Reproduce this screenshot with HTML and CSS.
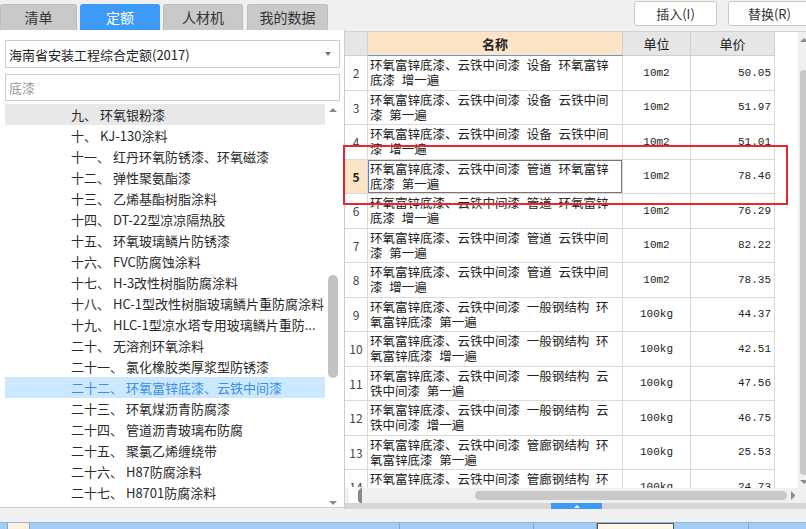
FILE: index.html
```html
<!DOCTYPE html>
<html lang="zh-CN">
<head>
<meta charset="utf-8">
<title>定额</title>
<link rel="stylesheet" href="styles.css">
</head>
<body>
<div class="top">
  <div class="tabs">
    <div class="tab first">清单</div>
    <div class="tab active">定额</div>
    <div class="tab">人材机</div>
    <div class="tab wide">我的数据</div>
  </div>
  <div class="actions">
    <div class="btn">插入(I)</div>
    <div class="btn">替换(R)</div>
  </div>
</div>

<div class="main">
  <div class="left">
    <div class="select">
      <span>海南省安装工程综合定额(2017)</span>
      <span class="caret"></span>
    </div>
    <div class="search"><span class="ph">底漆</span></div>
    <div class="tree">
      <div class="list">
        <div class="item hover">九、 环氧银粉漆</div>
        <div class="item">十、 KJ-130涂料</div>
        <div class="item">十一、 红丹环氧防锈漆、环氧磁漆</div>
        <div class="item">十二、 弹性聚氨酯漆</div>
        <div class="item">十三、 乙烯基酯树脂涂料</div>
        <div class="item">十四、 DT-22型凉凉隔热胶</div>
        <div class="item">十五、 环氧玻璃鳞片防锈漆</div>
        <div class="item">十六、 FVC防腐蚀涂料</div>
        <div class="item">十七、 H-3改性树脂防腐涂料</div>
        <div class="item">十八、 HC-1型改性树脂玻璃鳞片重防腐涂料</div>
        <div class="item">十九、 HLC-1型凉水塔专用玻璃鳞片重防...</div>
        <div class="item">二十、 无溶剂环氧涂料</div>
        <div class="item">二十一、 氯化橡胶类厚浆型防锈漆</div>
        <div class="item sel">二十二、 环氧富锌底漆、云铁中间漆</div>
        <div class="item">二十三、 环氧煤沥青防腐漆</div>
        <div class="item">二十四、 管道沥青玻璃布防腐</div>
        <div class="item">二十五、 聚氯乙烯缠绕带</div>
        <div class="item">二十六、 H87防腐涂料</div>
        <div class="item">二十七、 H8701防腐涂料</div>
        <div class="item">二十八、 耐酸碱防腐涂料</div>
      </div>
      <div class="tscroll">
        <span class="arr up"></span>
        <div class="ttrack"><div class="tthumb"></div></div>
        <span class="arr down"></span>
      </div>
    </div>
  </div>

  <div class="splitter"></div>

  <div class="right">
    <div class="grid-wrap">
      <div class="table">
        <div class="hdr">
          <div></div>
          <div class="hname">名称</div>
          <div>单位</div>
          <div>单价</div>
        </div>
        <div class="row"><div class="num">2</div><div class="name">环氧富锌底漆、云铁中间漆 设备 环氧富锌<br>底漆 增一遍</div><div class="unit">10m2</div><div class="price">50.05</div></div>
        <div class="row"><div class="num">3</div><div class="name">环氧富锌底漆、云铁中间漆 设备 云铁中间<br>漆 第一遍</div><div class="unit">10m2</div><div class="price">51.97</div></div>
        <div class="row"><div class="num">4</div><div class="name">环氧富锌底漆、云铁中间漆 设备 云铁中间<br>漆 增一遍</div><div class="unit">10m2</div><div class="price">51.01</div></div>
        <div class="row sel"><div class="num">5</div><div class="name">环氧富锌底漆、云铁中间漆 管道 环氧富锌<br>底漆 第一遍</div><div class="unit">10m2</div><div class="price">78.46</div></div>
        <div class="row"><div class="num">6</div><div class="name">环氧富锌底漆、云铁中间漆 管道 环氧富锌<br>底漆 增一遍</div><div class="unit">10m2</div><div class="price">76.29</div></div>
        <div class="row"><div class="num">7</div><div class="name">环氧富锌底漆、云铁中间漆 管道 云铁中间<br>漆 第一遍</div><div class="unit">10m2</div><div class="price">82.22</div></div>
        <div class="row"><div class="num">8</div><div class="name">环氧富锌底漆、云铁中间漆 管道 云铁中间<br>漆 增一遍</div><div class="unit">10m2</div><div class="price">78.35</div></div>
        <div class="row"><div class="num">9</div><div class="name">环氧富锌底漆、云铁中间漆 一般钢结构 环<br>氧富锌底漆 第一遍</div><div class="unit">100kg</div><div class="price">44.37</div></div>
        <div class="row"><div class="num">10</div><div class="name">环氧富锌底漆、云铁中间漆 一般钢结构 环<br>氧富锌底漆 增一遍</div><div class="unit">100kg</div><div class="price">42.51</div></div>
        <div class="row"><div class="num">11</div><div class="name">环氧富锌底漆、云铁中间漆 一般钢结构 云<br>铁中间漆 第一遍</div><div class="unit">100kg</div><div class="price">47.56</div></div>
        <div class="row"><div class="num">12</div><div class="name">环氧富锌底漆、云铁中间漆 一般钢结构 云<br>铁中间漆 增一遍</div><div class="unit">100kg</div><div class="price">46.75</div></div>
        <div class="row"><div class="num">13</div><div class="name">环氧富锌底漆、云铁中间漆 管廊钢结构 环<br>氧富锌底漆 第一遍</div><div class="unit">100kg</div><div class="price">25.53</div></div>
        <div class="row"><div class="num">14</div><div class="name">环氧富锌底漆、云铁中间漆 管廊钢结构 环<br>氧富锌底漆 增一遍</div><div class="unit">100kg</div><div class="price">24.73</div></div>
      </div>
      <div class="vscroll">
        <span class="arr up"></span>
        <div class="vtrack"><div class="vthumb"></div></div>
        <span class="arr down"></span>
      </div>
    </div>
    <div class="hscroll">
      <span class="arr left"></span>
      <div class="htrack"><div class="hthumb"></div></div>
      <span class="arr right"></span>
    </div>
    <div class="band"><div class="toggle"><span class="tri"></span></div></div>
    <div class="redbox"></div>
  </div>
</div>

<div class="bottom">
  <div class="strip">
    <div class="c c1"></div>
    <div class="c c2"></div>
    <div class="c c3"></div>
    <div class="c c4"></div>
    <div class="c c5"></div>
    <div class="c c6"></div>
    <div class="c c7"></div>
  </div>
</div>
</body>
</html>
```
FILE: styles.css
```css
* { box-sizing: border-box; }

body {
  margin: 0;
  width: 806px;
  height: 529px;
  overflow: hidden;
  background: #f0f0f0;
  font-family: "Noto Sans CJK SC", "Microsoft YaHei", sans-serif;
  font-size: 13px;
  color: #333;
}

/* top bar */
.top {
  height: 30px;
  display: flex;
  justify-content: space-between;
  align-items: flex-start;
}
.tabs {
  display: flex;
  gap: 3px;
  padding-top: 4px;
}
.tab {
  width: 80px;
  height: 26px;
  background: #c9c9c9;
  border: 1px solid #bcbcbc;
  border-bottom: none;
  border-radius: 3px 3px 0 0;
  text-align: center;
  line-height: 25px;
  font-size: 14px;
  color: #333;
}
.tab.first { width: 77px; }
.tab.wide { width: 81px; margin-left: 1px; }
.tab.active {
  background: #3d9af6;
  border-color: #3d9af6;
  color: #fff;
}
.actions {
  display: flex;
  gap: 11px;
  padding-top: 1px;
  margin-right: -5px;
}
.btn {
  width: 83px;
  height: 25px;
  background: #fff;
  border: 1px solid #c9c9c9;
  border-radius: 3px;
  text-align: center;
  line-height: 23px;
  font-size: 13px;
  color: #333;
}

/* main area */
.main {
  display: flex;
  height: 479px;
}
.left {
  width: 344px;
  height: 478px;
  background: #fff;
  padding: 10px 4px 0 5px;
  display: flex;
  flex-direction: column;
  border-bottom: 1px solid #cfcfcf;
}
.select {
  height: 28px;
  border: 1px solid #cdcdcd;
  display: flex;
  align-items: center;
  justify-content: space-between;
  padding: 0 8px 0 3px;
  color: #222;
  font-size: 13px;
}
.caret {
  width: 0;
  height: 0;
  border-left: 3px solid transparent;
  border-right: 3px solid transparent;
  border-top: 4px solid #777;
}
.search {
  margin-top: 6px;
  height: 27px;
  border: 1px solid #cdcdcd;
  display: flex;
  align-items: center;
  padding-left: 3px;
}
.ph { color: #9a9a9a; }

.tree {
  margin-top: 3px;
  flex: 1;
  display: flex;
  overflow: hidden;
}
.list {
  width: 320px;
  overflow: hidden;
}
.item {
  height: 21px;
  line-height: 21px;
  padding-left: 66px;
  white-space: nowrap;
  overflow: hidden;
  color: #2a2a2a;
  font-size: 13px;
}
.item.hover { background: #e8e8e8; }
.item.sel { background: #cce8ff; color: #3a8ee6; }

.tscroll {
  width: 15px;
  display: flex;
  flex-direction: column;
  align-items: center;
  padding: 4px 0 2px;
}
.ttrack {
  flex: 1;
  width: 100%;
  padding: 0 2px 0 3px;
}
.tthumb {
  margin-top: 159px;
  height: 103px;
  background: #c2c2c2;
  border-radius: 5px;
}

.arr {
  width: 0;
  height: 0;
  display: block;
  flex: none;
}
.arr.up {
  border-left: 4px solid transparent;
  border-right: 4px solid transparent;
  border-bottom: 4px solid #8a8a8a;
  margin-bottom: 4px;
}
.arr.down {
  border-left: 4px solid transparent;
  border-right: 4px solid transparent;
  border-top: 4px solid #8a8a8a;
  margin-top: 4px;
}
.arr.left {
  border-top: 4px solid transparent;
  border-bottom: 4px solid transparent;
  border-right: 4px solid #8a8a8a;
}
.arr.right {
  border-top: 4px solid transparent;
  border-bottom: 4px solid transparent;
  border-left: 4px solid #8a8a8a;
}

.splitter {
  width: 3px;
  background: #e4e4e4;
  border-left: 1px solid #cdcdcd;
}

/* right side */
.right {
  flex: 1;
  display: flex;
  flex-direction: column;
  padding-top: 1px;
  position: relative;
}
.grid-wrap {
  height: 457px;
  display: flex;
  background: #fff;
  border-top: 1px solid #d2d2d2;
}
.table {
  width: 448px;
  overflow: hidden;
}
.hdr, .row {
  display: grid;
  grid-template-columns: 23px 255px 68px 84px;
}
.hdr { height: 24px; }
.hdr > div {
  background: #e6e6e6;
  border-right: 1px solid #d0d0d0;
  border-bottom: 1px solid #d0d0d0;
  text-align: center;
  line-height: 23px;
  font-size: 13px;
  color: #222;
}
.hdr > .hname {
  background: #fde4c6;
  font-weight: bold;
  border-bottom: 1px solid #5b9bd5;
}
.row { height: 34.5px; }
.row > div {
  border-right: 1px solid #dadada;
  border-bottom: 1px solid #dadada;
}
.num {
  display: flex;
  align-items: center;
  justify-content: center;
  font-size: 12px;
  color: #444;
}
.name {
  padding: 1px 0 0 2px;
  line-height: 15px;
  font-size: 12.5px;
  word-spacing: 4px;
  color: #222;
  white-space: nowrap;
}
.unit, .price {
  display: flex;
  align-items: center;
  font-family: "Liberation Mono", monospace;
  font-size: 11px;
  color: #222;
}
.unit { justify-content: center; }
.price { justify-content: flex-end; padding-right: 3px; }

.row.sel .num {
  background: #fde4c6;
  font-weight: bold;
  color: #222;
}
.row.sel .name {
  box-shadow: inset 1px 0 0 #3b8de0, inset 0 0 0 1px #777;
}

.vscroll {
  width: 11px;
  margin-left: auto;
  background: #f0f0f0;
  display: flex;
  flex-direction: column;
  align-items: center;
  padding: 6px 0 4px;
}
.vtrack {
  flex: 1;
  width: 100%;
  padding: 0 1px 0 2px;
}
.vthumb {
  margin-top: 24px;
  height: 405px;
  background: #c8c8c8;
  border-radius: 4px;
}

.hscroll {
  height: 15px;
  background: #f0f0f0;
  display: flex;
  align-items: center;
  padding: 0 14px 0 4px;
}
.htrack {
  flex: 1;
  padding: 0 4px 0 113px;
}
.hthumb {
  height: 9px;
  background: #c8c8c8;
  border-radius: 5px;
  width: 312px;
}
.band {
  height: 6px;
  background: #d6d6d6;
  padding-left: 206px;
}
.toggle {
  width: 51px;
  height: 6px;
  background: #3d9af6;
  display: flex;
  justify-content: center;
  align-items: center;
}
.tri {
  width: 0;
  height: 0;
  border-left: 3px solid transparent;
  border-right: 3px solid transparent;
  border-bottom: 3px solid #fff;
}

.redbox {
  position: absolute;
  left: -2px;
  top: 115px;
  width: 445px;
  height: 60px;
  border: 2px solid #e8262d;
}

/* bottom */
.bottom {
  height: 20px;
  padding-top: 13px;
}
.strip {
  height: 7px;
  display: flex;
  background: #a3cdf4;
  border-top: 1px solid #8fb8e0;
}
.c { border-right: 1px solid #7fa9d4; }
.c1 { width: 8px; }
.c2 { width: 22px; background: #fdf0dc; }
.c3 { width: 370px; }
.c4 { width: 134px; }
.c5 { width: 63px; }
.c6 { width: 77px; background: #fdf6e6; border: 1px solid #555; border-bottom: none; }
.c7 { width: 75px; }
```
